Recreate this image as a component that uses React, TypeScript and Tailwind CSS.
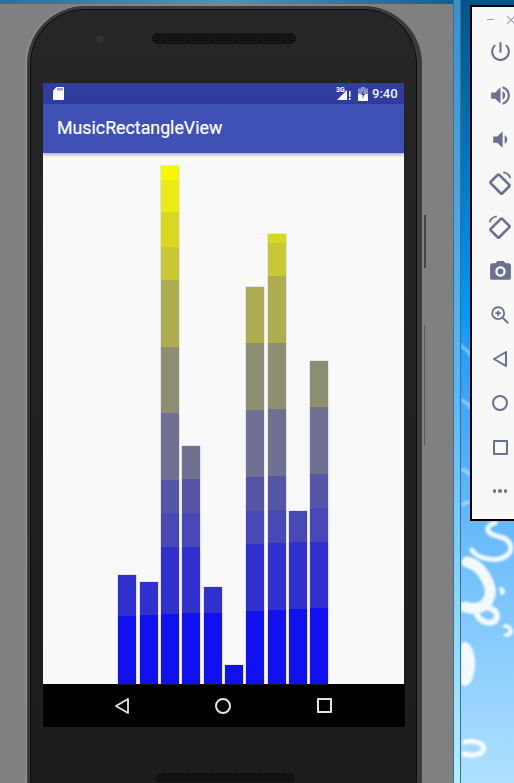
import React from "react";

// y positions of the colour steps of each bar, top first. floor of the view is 684
const FLOOR = 684;
const bars = [
  [575, 616],
  [582, 615],
  [166, 180, 212, 247, 280, 347, 413, 480, 513, 547, 614],
  [446, 479, 513, 547, 613],
  [587, 613],
  [665],
  [287, 343, 410, 477, 511, 544, 611],
  [234, 243, 276, 343, 409, 476, 510, 543, 610],
  [511, 542, 609],
  [361, 407, 474, 508, 542, 608],
];

const shades = [
  "bg-[#1010f0]",
  "bg-[#3030cf]",
  "bg-[#4848b7]",
  "bg-[#5656a8]",
  "bg-[#707090]",
  "bg-[#8e8e70]",
  "bg-[#aeae50]",
  "bg-[#c8c835]",
  "bg-[#d8d820]",
  "bg-[#ebeb12]",
  "bg-[#f8f800]",
];

const Bar = ({ steps }: { steps: number[] }) => (
  <div className="flex w-[18px] flex-col shadow-[0_0_0_0.5px_rgba(120,120,200,0.35)]">
    {steps.map((y, i) => {
      const next = i < steps.length - 1 ? steps[i + 1] : FLOOR;
      return (
        <div
          key={y}
          className={shades[steps.length - 1 - i]}
          style={{ height: next - y }}
        />
      );
    })}
  </div>
);

const ToolIcon = ({ d, className }: { d: string; className?: string }) => (
  <svg viewBox="0 0 24 24" className={className ?? "h-[25px] w-[25px]"} fill="currentColor">
    <path d={d} />
  </svg>
);

const RotateIcon = ({ flip }: { flip?: boolean }) => (
  <svg
    viewBox="0 0 24 24"
    className={flip ? "h-[26px] w-[26px] -scale-x-100" : "h-[26px] w-[26px]"}
    fill="none"
    stroke="currentColor"
  >
    <rect x="6.5" y="5.5" width="11" height="15" rx="1" strokeWidth="2.4" transform="rotate(-45 12 13)" />
    <path d="M15 2.2c3 .3 5.6 2.4 6.6 5.4" strokeWidth="1.6" />
  </svg>
);

const Toolbar = () => (
  <div className="relative flex h-[516px] w-[60px] flex-col items-start border-2 border-r-0 border-black bg-[#f8f8f8] pl-[15px] text-[#6a7090]">
    <div className="flex h-[22px] items-center gap-[13px] pt-[3px] text-[#9aa0b0]">
      <div className="h-[1.5px] w-[7px] bg-[#9aa0b0]" />
      <svg viewBox="0 0 8 8" className="h-2 w-2" stroke="currentColor" strokeWidth="1.2">
        <path d="M0 0l8 8M8 0l-8 8" />
      </svg>
    </div>
    <div className="flex w-[26px] flex-col items-center">
      <div className="flex h-[44px] items-center">
        <ToolIcon d="M13 3h-2v10h2V3zm4.83 2.17l-1.42 1.42C17.99 7.86 19 9.81 19 12c0 3.87-3.13 7-7 7s-7-3.13-7-7c0-2.19 1.01-4.14 2.58-5.42L6.17 5.17C4.23 6.82 3 9.26 3 12c0 4.97 4.03 9 9 9s9-4.03 9-9c0-2.74-1.23-5.18-3.17-6.83z" />
      </div>
      <div className="flex h-[44px] items-center">
        <ToolIcon d="M3 9v6h4l5 5V4L7 9H3zm13.5 3c0-1.77-1.02-3.29-2.5-4.03v8.05c1.48-.73 2.5-2.25 2.5-4.02zM14 3.23v2.06c2.89.86 5 3.54 5 6.71s-2.11 5.85-5 6.71v2.06c4.01-.91 7-4.49 7-8.77s-2.99-7.86-7-8.77z" />
      </div>
      <div className="flex h-[44px] items-center">
        <ToolIcon d="M18.5 12c0-1.77-1.02-3.29-2.5-4.03v8.05c1.48-.73 2.5-2.25 2.5-4.02zM5 9v6h4l5 5V4L9 9H5z" />
      </div>
      <div className="flex h-[44px] items-center">
        <RotateIcon />
      </div>
      <div className="flex h-[44px] items-center">
        <RotateIcon flip />
      </div>
      <div className="flex h-[44px] items-center">
        <ToolIcon d="M9 2L7.17 4H4c-1.1 0-2 .9-2 2v12c0 1.1.9 2 2 2h16c1.1 0 2-.9 2-2V6c0-1.1-.9-2-2-2h-3.17L15 2H9zm3 15c-2.76 0-5-2.24-5-5s2.24-5 5-5 5 2.24 5 5-2.24 5-5 5zm0-2.2a2.8 2.8 0 1 0 0-5.6 2.8 2.8 0 0 0 0 5.6z" />
      </div>
      <div className="flex h-[44px] items-center">
        <svg viewBox="0 0 24 24" className="h-[22px] w-[22px]" fill="none" stroke="currentColor" strokeWidth="2">
          <circle cx="10" cy="10" r="6.5" />
          <path d="M15 15l6 6M10 7v6M7 10h6" />
        </svg>
      </div>
      <div className="flex h-[44px] items-center">
        <svg viewBox="0 0 16 18" className="h-[18px] w-4" fill="none" stroke="currentColor" strokeWidth="2">
          <path d="M14 2v14L2 9z" strokeLinejoin="round" />
        </svg>
      </div>
      <div className="flex h-[44px] items-center">
        <div className="h-4 w-4 rounded-full border-2 border-current" />
      </div>
      <div className="flex h-[44px] items-center">
        <div className="h-[15px] w-[15px] rounded-[1px] border-2 border-current" />
      </div>
      <div className="flex h-[44px] items-center gap-[2px]">
        <div className="h-[3.5px] w-[3.5px] rounded-full bg-current" />
        <div className="h-[3.5px] w-[3.5px] rounded-full bg-current" />
        <div className="h-[3.5px] w-[3.5px] rounded-full bg-current" />
      </div>
    </div>
  </div>
);

// the cloud swirls of the desktop wallpaper, x measured from the left of the desktop strip
const Wallpaper = () => (
  <svg
    viewBox="0 0 53 783"
    className="absolute left-0 top-0 h-[783px] w-[53px] blur-[1px]"
    fill="none"
    stroke="#ffffff"
    strokeLinecap="round"
  >
    <g opacity="0.45" strokeWidth="3">
      <path d="M0 345c4 6 7 4 9 10M1 400c3 3 6 2 8 8M0 470c6-2 7 6 9 4M2 505c2-3 5-3 7-2" />
    </g>
    <g opacity="0.9">
      <path d="M11 550c6 10 30 14 38 2 3-8-3-14-10-15-6-2-13-3-12-9 1-3 4-4 7-5" strokeWidth="5" />
      <path d="M6 562c10 2 16 10 20 18 4 8 5 14 0 22-4 6-12 8-22 5" strokeWidth="11" />
      <path d="M16 615c6 10 20 10 20 1 0-5-4-7-8-8" strokeWidth="6" />
      <path d="M40 589c2 2 3 3 1 4" strokeWidth="4" />
      <path d="M44 626c4 0 6 3 6 6-1 2-3 3-5 3" strokeWidth="4" />
      <path d="M4 742c10-2 17 1 19 6-1 6-10 9-20 6" strokeWidth="5" />
    </g>
    <ellipse cx="4" cy="664" rx="10" ry="22" fill="#ffffff" stroke="none" opacity="0.9" />
  </svg>
);

export default function App() {
  return (
    <div className="flex h-[783px] w-[514px] overflow-hidden font-['Roboto',sans-serif]">
      {/* emulator window */}
      <div className="flex h-full w-[453px] shrink-0 flex-col overflow-hidden bg-[#808080]">
        <div className="h-[4px] shrink-0 bg-gradient-to-r from-[#2a6f9e] via-[#4f93bb] to-[#0f5f92]" />
        <div className="ml-[27px] mt-[2px] flex">
          {/* phone */}
          <div className="h-[830px] w-[395px] shrink-0 rounded-[58px] border-y-[3px] border-l-[3px] border-r-[5px] border-[#3a3a3a] bg-gradient-to-b from-[#262626] to-[#1c1c1c] shadow-[inset_0_0_0_1px_#0c0c0c,-1px_0_2px_rgba(200,200,200,0.4)]">
            <div className="flex h-[74px] items-start pl-[66px] pt-[24px]">
              <div className="mt-[2px] h-[8px] w-[8px] rounded-full bg-[#303030]" />
              <div className="ml-[48px] h-[11px] w-[144px] rounded-full bg-[#161616] bg-[radial-gradient(#050505_1px,transparent_1px)] bg-[length:3px_3px]" />
            </div>
            <div className="ml-[13px] w-[361px]">
              {/* status bar */}
              <div className="flex h-[21px] items-center bg-[#303c9e] pl-[10px] text-white">
                <svg viewBox="0 0 11 13" className="h-[13px] w-[11px]" fill="#ffffff">
                  <path d="M3.5 0H10a1 1 0 0 1 1 1v11a1 1 0 0 1-1 1H1a1 1 0 0 1-1-1V3.5z" />
                  <path d="M4.5 1h1v2.5h-1zM6.5 1h1v2.5h-1zM8.5 1h1v2.5h-1z" fill="#303c9e" />
                </svg>
                <div className="relative ml-[272px] h-[14px] w-[16px]">
                  <span className="absolute left-0 top-[-1px] text-[7px] font-bold leading-[8px]">3G</span>
                  <svg viewBox="0 0 16 14" className="h-[14px] w-[16px]" fill="#ffffff">
                    <path d="M11 3v10H1z" />
                    <path d="M13 4h1.5v6H13zM13 11h1.5v2H13z" />
                  </svg>
                </div>
                <svg viewBox="0 0 10 14" className="ml-[6px] h-[14px] w-[10px]">
                  <path d="M3 0h4v1.5h3V14H0V1.5h3z" fill="#8a90c4" />
                  <path d="M0 7h10v7H0z" fill="#ffffff" />
                  <path d="M6 3L3 8h2l-1 4 3-5H5z" fill="#303c9e" />
                </svg>
                <span className="ml-[4px] text-[13px] font-medium leading-none text-[#f0f0f8]">9:40</span>
              </div>
              {/* app bar */}
              <div className="relative z-10 flex h-[49px] items-center bg-[#3f51b5] pl-[14px] shadow-[0_2px_3px_rgba(0,0,0,0.28)]">
                <span className="text-[17.8px] font-normal text-white [-webkit-text-stroke:0.2px_white]">MusicRectangleView</span>
              </div>
              {/* visualizer */}
              <div className="flex h-[531px] items-end gap-[3.33px] bg-[#f9f9f9] pl-[75.33px]">
                {bars.map((steps) => (
                  <Bar key={steps[0]} steps={steps} />
                ))}
              </div>
              {/* nav bar */}
              <div className="-mr-px flex h-[43px] items-center bg-black text-[#e4e4e4]">
                <svg viewBox="0 0 16 18" className="ml-[71px] h-[18px] w-4" fill="none" stroke="currentColor" strokeWidth="1.8">
                  <path d="M14 2v14L2 9z" strokeLinejoin="round" />
                </svg>
                <div className="ml-[85px] h-4 w-4 rounded-full border-2 border-current" />
                <div className="ml-[86px] h-[15px] w-[15px] rounded-[1px] border-2 border-current" />
              </div>
            </div>
            <div className="ml-[125px] mt-[46px] h-[12px] w-[140px] rounded-full bg-[#141414] bg-[radial-gradient(#050505_1px,transparent_1px)] bg-[length:3px_3px]" />
          </div>
          {/* side buttons */}
          <div className="ml-[2px] flex flex-col">
            <div className="mt-[209px] h-[53px] w-[2px] bg-[#444444]" />
            <div className="mt-[57px] h-[120px] w-px bg-[#5a5a5a]" />
          </div>
        </div>
      </div>

      {/* window edge */}
      <div className="h-full w-[8px] shrink-0 border-x border-[#3f6f88] bg-gradient-to-b from-[#3a92cc] via-[#5ab8fa] to-[#b0f0ff]" />

      {/* desktop */}
      <div className="relative h-full min-w-0 flex-1 overflow-hidden bg-gradient-to-b from-[#00558a] via-[#0099f5] via-40% to-[#aee0ff]">
        <Wallpaper />
        <div className="relative ml-[9px] pt-[5px]">
          <Toolbar />
        </div>
      </div>
    </div>
  );
}
